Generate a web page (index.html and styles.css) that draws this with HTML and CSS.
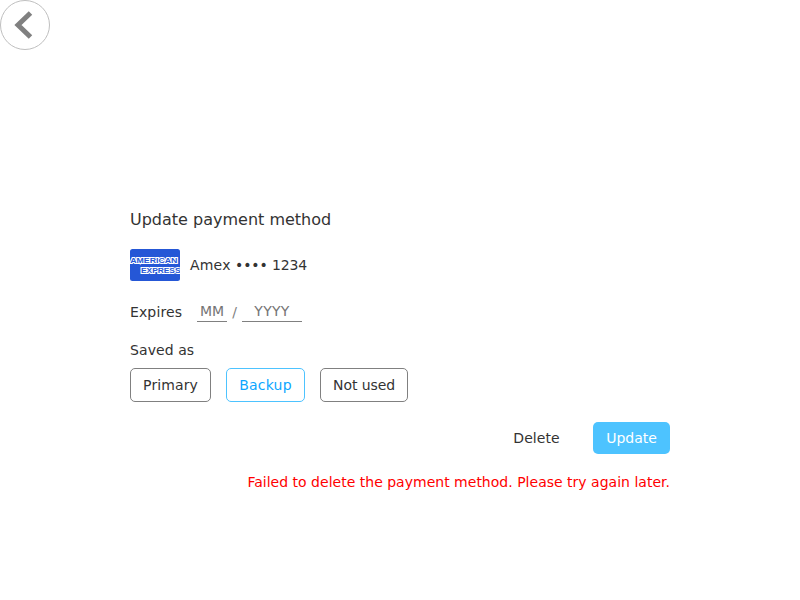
FILE: index.html
```html
<!DOCTYPE html>
<html lang="en">
<head>
<meta charset="utf-8">
<title>Update payment method</title>
<link rel="stylesheet" href="styles.css">
</head>
<body>
<button class="back" aria-label="Back"><svg width="48" height="48" viewBox="0 0 48 48"><path d="M29.5 12 L17 24 L29.5 36" fill="none" stroke="#808080" stroke-width="5"/></svg></button>
<main class="panel">
<h1 class="title">Update payment method</h1>
<div class="card">
<svg class="logo" width="50" height="32" viewBox="0 0 50 32"><rect width="50" height="32" rx="2.5" fill="#2557d6"/><text class="brand" x="0.3" y="14" textLength="47" lengthAdjust="spacingAndGlyphs">AMERICAN</text><text class="brand" x="11" y="23.9" textLength="39.5" lengthAdjust="spacingAndGlyphs">EXPRESS</text></svg>
<span class="number"><span class="type">Amex</span> •••• 1234</span>
</div>
<div class="expires"><span class="label">Expires</span><input class="month" placeholder="MM" aria-label="Month"><span class="slash">/</span><input class="year" placeholder="YYYY" aria-label="Year"></div>
<div class="saved">Saved as</div>
<div class="options"><button class="option primary">Primary</button><button class="option selected">Backup</button><button class="option unused">Not used</button></div>
<div class="actions"><button class="delete">Delete</button><button class="update">Update</button></div>
<p class="error">Failed to delete the payment method. Please try again later.</p>
</main>
</body>
</html>
```
FILE: styles.css
```css
* { box-sizing: border-box; }
body { margin: 0; font: 14px/16px "DejaVu Sans", sans-serif; color: #333; background: #fff; }
button, input { font: inherit; color: inherit; margin: 0; padding: 0; background: none; border: 0; }
.back { display: block; width: 50px; height: 50px; border: 1px solid #bfbfbf; border-radius: 50%; }
.back svg { display: block; }
.panel { width: 540px; margin: 160px auto 0; }
.title { margin: 0; font-size: 16px; line-height: 19px; font-weight: 400; }
.card { display: flex; align-items: center; gap: 10px; height: 32px; margin-top: 20px; }
.number { letter-spacing: -0.12px; }
.type { letter-spacing: 0.2px; }
.brand { font: bold 7.6px "Liberation Sans", sans-serif; fill: #2557d6; stroke: #fff; stroke-width: 2px; paint-order: stroke; }
.expires { display: flex; align-items: center; margin-top: 20px; height: 21px; }
.label { width: 67px; letter-spacing: 0.12px; }
.month, .year { height: 21px; text-align: center; border-bottom: 1px solid #808080; outline: 0; }
.month { width: 30px; }
.year { width: 60px; letter-spacing: 0.3px; }
.slash { width: 15px; text-align: center; color: #808080; }
.saved { margin-top: 20px; letter-spacing: 0.08px; }
.options { display: flex; gap: 15px; margin-top: 10px; }
.option { height: 34px; padding: 0 12px; border: 1px solid #808080; border-radius: 5px; }
.primary { width: 81px; letter-spacing: 0.1px; }
.selected { width: 79px; letter-spacing: 0.2px; color: #0da6ff; border-color: #4dc3ff; }
.unused { width: 88px; letter-spacing: -0.08px; }
.actions { display: flex; justify-content: flex-end; margin-top: 20px; gap: 20px; }
.delete, .update { height: 32px; padding: 0 13px; border-radius: 5px; }
.delete { width: 73px; letter-spacing: 0.06px; }
.update { width: 77px; background: #4dc3ff; color: #fff; }
.error { margin: 20px 0 0; text-align: right; letter-spacing: 0.01px; color: #f00; }
```
